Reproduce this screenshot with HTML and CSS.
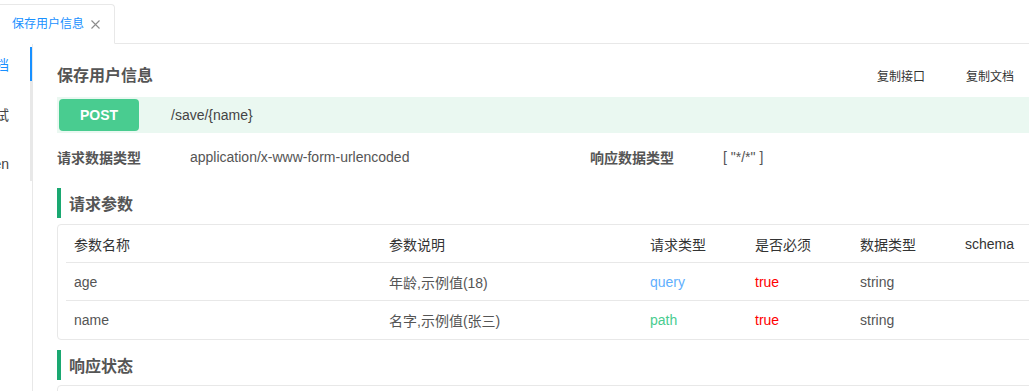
FILE: index.html
```html
<!DOCTYPE html>
<html lang="zh-CN">
<head>
<meta charset="utf-8">
<title>保存用户信息</title>
<link rel="stylesheet" href="styles.css">
</head>
<body>
<div class="page">
  <div class="tabbar">
    <div class="tab">
      <span class="tab-title">保存用户信息</span>
      <svg class="tab-close" width="9" height="9" viewBox="0 0 9 9"><path d="M0.5 0.5L8.5 8.5M8.5 0.5L0.5 8.5" stroke="#8c8c8c" stroke-width="1.1" fill="none"/></svg>
    </div>
    <div class="tab-rest"></div>
  </div>
  <div class="main">
    <div class="side">
      <div class="nav">
        <div class="nav-item active"><span>文档</span></div>
        <div class="nav-item"><span>调试</span></div>
        <div class="nav-item"><span>Open</span></div>
      </div>
    </div>
    <div class="content">
      <div class="title-row">
        <h1 class="title">保存用户信息</h1>
        <div class="actions">
          <span class="action">复制接口</span>
          <span class="action">复制文档</span>
        </div>
      </div>
      <div class="api-bar">
        <span class="method">POST</span>
        <span class="path">/save/{name}</span>
      </div>
      <div class="info-row">
        <span class="info-label">请求数据类型</span>
        <span class="info-value">application/x-www-form-urlencoded</span>
        <span class="info-label">响应数据类型</span>
        <span class="info-value">[ "*/*" ]</span>
      </div>
      <h2 class="section">请求参数</h2>
      <div class="table">
        <div class="row head">
          <span>参数名称</span><span>参数说明</span><span>请求类型</span><span>是否必须</span><span>数据类型</span><span>schema</span>
        </div>
        <div class="row">
          <span>age</span><span>年龄,示例值(18)</span><span class="t-query">query</span><span class="t-true">true</span><span>string</span><span></span>
        </div>
        <div class="row last">
          <span>name</span><span>名字,示例值(张三)</span><span class="t-path">path</span><span class="t-true">true</span><span>string</span><span></span>
        </div>
      </div>
      <h2 class="section section2">响应状态</h2>
      <div class="table table2"></div>
    </div>
  </div>
</div>
</body>
</html>
```

FILE: styles.css
```css
html, body {
  margin: 0;
  padding: 0;
  background: #fff;
  overflow: hidden;
}
body {
  font-family: "Liberation Sans", Arial, "Noto Sans CJK SC", sans-serif;
  color: #555;
}
.page {
  width: 1100px;
  height: 391px;
  overflow: hidden;
}
.tabbar {
  display: flex;
  align-items: flex-end;
  height: 44px;
  box-sizing: border-box;
  padding-top: 4px;
}
.tab {
  display: flex;
  align-items: center;
  height: 40px;
  box-sizing: border-box;
  width: 115px;
  padding-left: 12px;
  border: 1px solid #e8e8e8;
  border-left: none;
  border-bottom-color: #fff;
  border-radius: 0 4px 0 0;
  background: #fff;
}
.tab-title {
  font-size: 12px;
  color: #1890ff;
  line-height: 16px;
}
.tab-close {
  margin-left: 7px;
  margin-top: 1px;
}
.tab-rest {
  flex: 1;
  border-bottom: 1px solid #e8e8e8;
}
.main {
  display: flex;
  align-items: stretch;
  height: 347px;
}
.side {
  width: 33px;
  flex: none;
  box-sizing: border-box;
  border-right: 1px solid #e8e8e8;
  overflow: hidden;
}
.nav {
  margin-top: 3px;
  border-right: 2px solid #e8e8e8;
}
.nav-item {
  display: flex;
  justify-content: flex-end;
  align-items: center;
  height: 34px;
  margin-right: -2px;
  margin-bottom: 16px;
  padding-right: 21px;
  border-right: 2px solid transparent;
  font-size: 14px;
  color: #444;
  white-space: nowrap;
}
.nav-item:last-child {
  margin-bottom: 0;
}
.nav-item.active {
  color: #1890ff;
  border-right-color: #1890ff;
}
.content {
  flex: 1;
  padding: 16px 0 0 24px;
}
.title-row {
  display: flex;
  align-items: center;
  height: 28px;
}
.title {
  flex: 1;
  margin: 0;
  font-size: 16px;
  font-weight: bold;
  color: #555;
}
.actions {
  display: flex;
  gap: 41px;
  margin-right: 86px;
  margin-top: 2px;
}
.action {
  font-size: 12px;
  color: #333;
}
.api-bar {
  display: flex;
  align-items: center;
  height: 36px;
  margin-top: 9px;
  background: #eaf8f1;
}
.method {
  width: 80px;
  height: 32px;
  margin-left: 2px;
  border-radius: 4px;
  background: #49cc90;
  color: #fff;
  font-weight: bold;
  font-size: 14px;
  line-height: 32px;
  text-align: center;
}
.path {
  margin-left: 32px;
  font-size: 14px;
  color: #444;
}
.info-row {
  display: grid;
  grid-template-columns: 133px 400px 133px 1fr;
  align-items: center;
  height: 20px;
  margin-top: 14px;
}
.info-label {
  font-size: 14px;
  font-weight: bold;
  color: #555;
}
.info-value {
  font-size: 14px;
  color: #555;
}
.section {
  margin: 21px 0 0;
  height: 30px;
  border-left: 4px solid #1aa871;
  padding-left: 8px;
  font-size: 16px;
  font-weight: bold;
  line-height: 33px;
  color: #555;
}
.section2 {
  margin-top: 10px;
}
.table {
  margin-top: 6px;
  border: 1px solid #e8e8e8;
  border-radius: 4px;
  padding: 0 8px;
}
.table2 {
  margin-top: 5px;
  height: 40px;
}
.row {
  display: grid;
  grid-template-columns: 315px 261px 105px 105px 105px 1fr;
  align-items: center;
  height: 38px;
  box-sizing: border-box;
  border-bottom: 1px solid #e8e8e8;
  font-size: 14px;
  color: #555;
}
.row span {
  padding-left: 8px;
}
.row.head {
  color: #333;
}
.row.last {
  border-bottom: none;
}
.t-query {
  color: #61affe;
}
.t-path {
  color: #49cc90;
}
.t-true {
  color: #f00;
}
```
